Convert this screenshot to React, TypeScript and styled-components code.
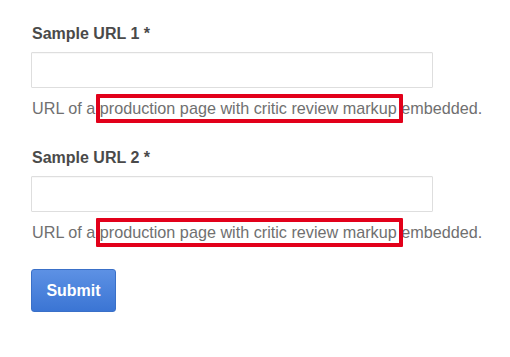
import styled, { createGlobalStyle } from 'styled-components';

const GlobalStyle = createGlobalStyle`
	html, body {
		margin: 0;
		padding: 0;
		background: #fff;
	}
	body {
		font-family: "Liberation Sans", Arial, sans-serif;
	}
`;

const Form = styled.form`
	display: flex;
	flex-direction: column;
	align-items: flex-start;
	padding: 24px 0 0 32px;
`;

const Field = styled.div`
	display: flex;
	flex-direction: column;
	margin-bottom: 30px;

	&:last-of-type {
		margin-bottom: 27px;
	}
`;

const Label = styled.label`
	font-size: 16px;
	line-height: 20px;
	font-weight: bold;
	color: #4a4a4a;
	margin-bottom: 8px;
`;

const Input = styled.input`
	box-sizing: border-box;
	width: 402px;
	height: 36px;
	margin: 0 0 0 -1px;
	border: 1px solid #dedede;
	border-radius: 1px;
	background: #fff;
	box-shadow: inset 0 1px 1px rgba(0, 0, 0, 0.03);
	outline: none;
`;

const Help = styled.div`
	margin-top: 10px;
	font-size: 16.2px;
	line-height: 20px;
	color: #707070;
	white-space: nowrap;
`;

const Highlight = styled.span`
	position: relative;

	&::after {
		content: '';
		position: absolute;
		top: -5px;
		bottom: -6px;
		left: -4px;
		right: -6px;
		border: 4px solid #e2001a;
		border-radius: 1px;
		pointer-events: none;
	}
`;

const SubmitButton = styled.button`
	width: 85px;
	height: 43px;
	margin-left: -1px;
	border: 1px solid #3a70c8;
	border-radius: 3px;
	background: linear-gradient(to bottom, #5d91e4, #3b75d4);
	color: #fff;
	font-family: "Liberation Sans", Arial, sans-serif;
	font-size: 16px;
	font-weight: bold;
	cursor: pointer;
`;

type FieldProps = {
	index: number;
};

const UrlField = ({ index }: FieldProps) => (
	<Field>
		<Label htmlFor={`url-${index}`}>Sample URL {index} *</Label>
		<Input id={`url-${index}`} type="text" />
		<Help>
			URL of a <Highlight>production page with critic review markup</Highlight> embedded.
		</Help>
	</Field>
);

const App = () => (
	<>
		<GlobalStyle />
		<Form onSubmit={(e) => e.preventDefault()}>
			<UrlField index={1} />
			<UrlField index={2} />
			<SubmitButton type="submit">Submit</SubmitButton>
		</Form>
	</>
);

export default App;
